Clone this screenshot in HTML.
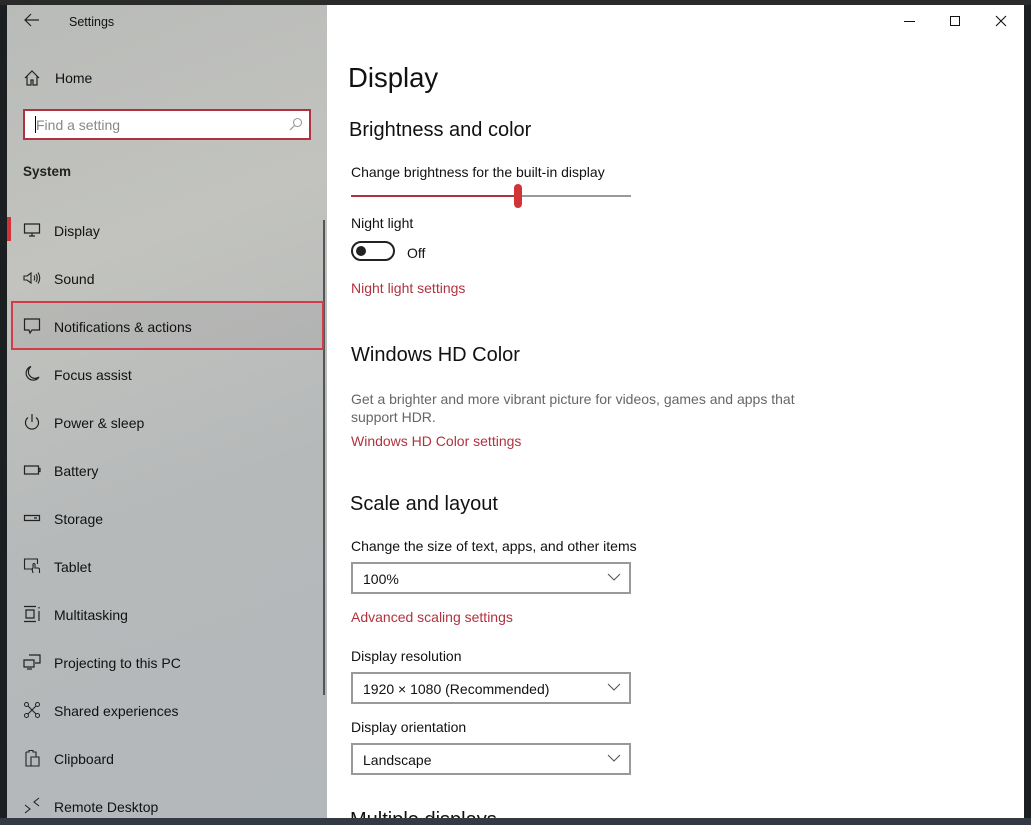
<!DOCTYPE html>
<html><head><meta charset="utf-8">
<style>
*{margin:0;padding:0;box-sizing:border-box}
body{width:1031px;height:825px;overflow:hidden;background:#1c1f22;font-family:"Liberation Sans",sans-serif;position:relative}
.abs{position:absolute}
#side{left:7px;top:5px;width:320px;height:813px;background:linear-gradient(160deg,#b9bbb9 0%,#c2c3be 30%,#b6b9ba 60%,#b3b8ba 100%)}
#main{left:327px;top:5px;width:697px;height:813px;background:#fff}
.t{position:absolute;font-size:14px;color:#111;white-space:nowrap}
.ico{position:absolute;left:23px;width:18px;height:18px}
.link{color:#b0323e}
.h2{font-size:20px;color:#111}
.dd{position:absolute;left:351px;width:280px;height:32px;border:2px solid #999;background:#fff}
.dd span{position:absolute;left:10px;top:7px;font-size:14px;color:#111}
.dd svg{position:absolute;right:8px;top:9px}
</style></head><body>
<div class="abs" style="left:0;top:0;width:1031px;height:5px;background:#2a2a2a"></div>
<div class="abs" style="left:0;top:818px;width:1031px;height:7px;background:#333a44"></div>
<div id="side" class="abs"></div>
<div id="main" class="abs"></div>

<svg class="abs" style="left:24px;top:13px" width="16" height="14" viewBox="0 0 16 14"><path d="M7 1L1 7l6 6M1 7h14" fill="none" stroke="#222" stroke-width="1.2"/></svg>
<div class="t" style="left:69px;top:15px;font-size:12.5px">Settings</div>
<svg class="ico" style="top:69px" viewBox="0 0 18 18"><path d="M2 9L9 2l7 7M4 7v9h4v-5h2v5h4V7" fill="none" stroke="#222" stroke-width="1.2"/></svg>
<div class="t" style="left:55px;top:70px;font-size:14px">Home</div>
<div class="abs" style="left:23px;top:109px;width:288px;height:31px;border:2px solid #b0323e;background:#fff"></div>
<div class="abs" style="left:35px;top:116px;width:1px;height:17px;background:#000"></div>
<div class="t" style="left:36px;top:117px;color:#888;font-size:14px">Find a setting</div>
<svg class="abs" style="left:289px;top:117px" width="14" height="14" viewBox="0 0 14 14"><circle cx="8.5" cy="5.5" r="4" fill="none" stroke="#999" stroke-width="1.1"/><path d="M5.5 8.5L1 13" stroke="#999" stroke-width="1.2"/></svg>
<div class="t" style="left:23px;top:164px;font-weight:bold;font-size:13.5px;color:#222">System</div>

<div class="abs" style="left:7px;top:217px;width:4px;height:24px;background:#d13438"></div>
<div class="abs" style="left:323px;top:220px;width:2px;height:475px;background:#555"></div>
<div class="abs" style="left:11px;top:301px;width:313px;height:49px;border:2px solid #d33a4a;background:rgba(140,140,140,0.18)"></div>

<svg class="ico" style="top:221px" viewBox="0 0 18 18"><path d="M1.5 3h15v9h-15zM6 15h6M9 12v3" fill="none" stroke="#222" stroke-width="1.2"/></svg>
<div class="t" style="left:54px;top:223px">Display</div>
<svg class="ico" style="top:269px" viewBox="0 0 18 18"><path d="M1 7h3l4-3v10l-4-3H1zM11 6.5q1.5 2.5 0 5M13 5q2.5 4 0 8M15 3.5q3.5 5.5 0 11" fill="none" stroke="#222" stroke-width="1.1"/></svg>
<div class="t" style="left:54px;top:271px">Sound</div>
<svg class="ico" style="top:317px" viewBox="0 0 18 18"><path d="M1.5 2h15v11H9l-2 3-1-3H1.5z" fill="none" stroke="#222" stroke-width="1.2"/></svg>
<div class="t" style="left:54px;top:319px">Notifications &amp; actions</div>
<svg class="ico" style="top:365px" viewBox="0 0 18 18"><path d="M8 1.5A7 7 0 1 0 16 12 6.5 6.5 0 0 1 8 1.5z" fill="none" stroke="#222" stroke-width="1.2"/></svg>
<div class="t" style="left:54px;top:367px">Focus assist</div>
<svg class="ico" style="top:413px" viewBox="0 0 18 18"><path d="M5 4.5a6.5 6.5 0 1 0 8 0M9 1v8" fill="none" stroke="#222" stroke-width="1.2"/></svg>
<div class="t" style="left:54px;top:415px">Power &amp; sleep</div>
<svg class="ico" style="top:461px" viewBox="0 0 18 18"><path d="M1.5 5h14v8h-14zM15.5 7.5h1.5v3h-1.5" fill="none" stroke="#222" stroke-width="1.2"/></svg>
<div class="t" style="left:54px;top:463px">Battery</div>
<svg class="ico" style="top:509px" viewBox="0 0 18 18"><path d="M1.5 6.5h15v5h-15zM11 9h3" fill="none" stroke="#222" stroke-width="1.2"/></svg>
<div class="t" style="left:54px;top:511px">Storage</div>
<svg class="ico" style="top:557px" viewBox="0 0 18 18"><path d="M10 12H1.5V2h13v5M10 16l-1-4 1-1V7.5a1 1 0 0 1 2 0V11h3a1.5 1.5 0 0 1 1.5 1.5V16" fill="none" stroke="#222" stroke-width="1.1"/></svg>
<div class="t" style="left:54px;top:559px">Tablet</div>
<svg class="ico" style="top:605px" viewBox="0 0 18 18"><path d="M1 1.5h12M1 16.5h12M3 5h8v8H3zM16 2v1.5M16 6v10" fill="none" stroke="#222" stroke-width="1.2"/></svg>
<div class="t" style="left:54px;top:607px">Multitasking</div>
<svg class="ico" style="top:653px" viewBox="0 0 18 18"><path d="M6 2h11v8h-5M1 7h10v7H1zM4 16h5" fill="none" stroke="#222" stroke-width="1.2"/></svg>
<div class="t" style="left:54px;top:655px">Projecting to this PC</div>
<svg class="ico" style="top:701px" viewBox="0 0 18 18"><circle cx="3.5" cy="3.5" r="2" fill="none" stroke="#222"/><circle cx="14.5" cy="3.5" r="2" fill="none" stroke="#222"/><circle cx="3.5" cy="14.5" r="2" fill="none" stroke="#222"/><circle cx="14.5" cy="14.5" r="2" fill="none" stroke="#222"/><path d="M5 5l8 8M13 5l-8 8" stroke="#222" stroke-width="1.1"/></svg>
<div class="t" style="left:54px;top:703px">Shared experiences</div>
<svg class="ico" style="top:749px" viewBox="0 0 18 18"><path d="M3 3h3V1.5h4V3h3v5M3 3v14h5M8 8h8v9H8z" fill="none" stroke="#222" stroke-width="1.1"/></svg>
<div class="t" style="left:54px;top:751px">Clipboard</div>
<svg class="ico" style="top:797px" viewBox="0 0 18 18"><path d="M2 8l5 4-5 4M16 1l-5 4 5 4" fill="none" stroke="#222" stroke-width="1.1"/></svg>
<div class="t" style="left:54px;top:799px">Remote Desktop</div>

<div class="abs" style="left:904px;top:21px;width:11px;height:1px;background:#111"></div>
<div class="abs" style="left:950px;top:16px;width:10px;height:10px;border:1px solid #111"></div>
<svg class="abs" style="left:995px;top:15px" width="12" height="12" viewBox="0 0 12 12"><path d="M1 1l10 10M11 1L1 11" stroke="#111" stroke-width="1.1"/></svg>

<div class="t" style="left:348px;top:62px;font-size:27.5px;color:#111">Display</div>
<div class="t h2" style="left:349px;top:119px">Brightness and color</div>
<div class="t" style="left:351px;top:164px">Change brightness for the built-in display</div>
<div class="abs" style="left:351px;top:195px;width:168px;height:2px;background:#b0323e"></div>
<div class="abs" style="left:519px;top:195px;width:112px;height:2px;background:#999"></div>
<div class="abs" style="left:514px;top:184px;width:8px;height:24px;border-radius:4px;background:#d13438"></div>
<div class="t" style="left:351px;top:215px">Night light</div>
<div class="abs" style="left:351px;top:241px;width:44px;height:20px;border:2px solid #222;border-radius:10px"></div>
<div class="abs" style="left:356px;top:246px;width:10px;height:10px;border-radius:5px;background:#222"></div>
<div class="t" style="left:407px;top:245px">Off</div>
<div class="t link" style="left:351px;top:280px">Night light settings</div>

<div class="t h2" style="left:351px;top:344px">Windows HD Color</div>
<div class="t" style="left:351px;top:390px;color:#666;line-height:18px">Get a brighter and more vibrant picture for videos, games and apps that<br>support HDR.</div>
<div class="t link" style="left:351px;top:433px">Windows HD Color settings</div>

<div class="t h2" style="left:350px;top:493px">Scale and layout</div>
<div class="t" style="left:351px;top:538px">Change the size of text, apps, and other items</div>
<div class="dd" style="top:562px"><span>100%</span><svg width="14" height="9" viewBox="0 0 14 9"><path d="M1 1l6 6 6-6" fill="none" stroke="#555" stroke-width="1.1"/></svg></div>
<div class="t link" style="left:351px;top:609px">Advanced scaling settings</div>
<div class="t" style="left:351px;top:648px">Display resolution</div>
<div class="dd" style="top:672px"><span>1920 × 1080 (Recommended)</span><svg width="14" height="9" viewBox="0 0 14 9"><path d="M1 1l6 6 6-6" fill="none" stroke="#555" stroke-width="1.1"/></svg></div>
<div class="t" style="left:351px;top:719px">Display orientation</div>
<div class="dd" style="top:743px"><span>Landscape</span><svg width="14" height="9" viewBox="0 0 14 9"><path d="M1 1l6 6 6-6" fill="none" stroke="#555" stroke-width="1.1"/></svg></div>
<div class="abs" style="left:327px;top:805px;width:300px;height:13px;overflow:hidden"><div class="t h2" style="left:23px;top:4px">Multiple displays</div></div>
</body></html>
